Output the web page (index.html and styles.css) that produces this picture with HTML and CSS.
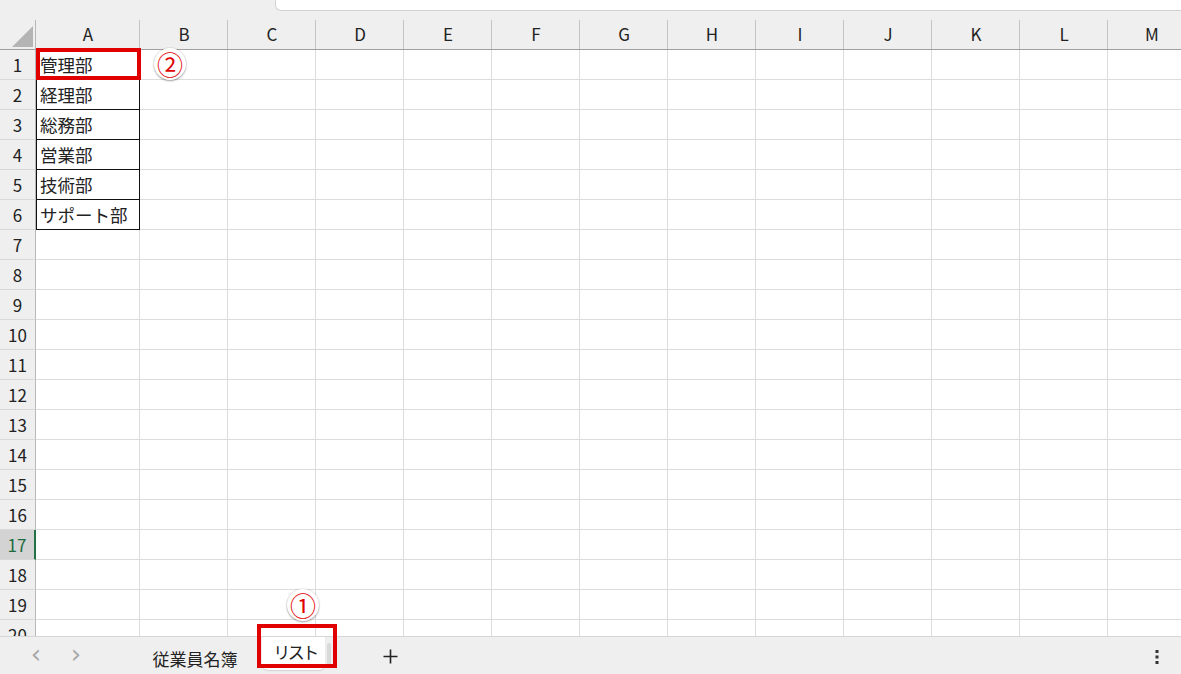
FILE: index.html
```html
<!DOCTYPE html>
<html lang="ja">
<head>
<meta charset="utf-8">
<title>リスト</title>
<link rel="stylesheet" href="styles.css">
</head>
<body>
<div class="app">
  <div class="topbar"><div class="fxbox"></div></div>
  <div class="sheet">
    <div class="grid">
      <div class="corner"><span class="tri"></span></div>
      <div class="ch">A</div><div class="ch">B</div><div class="ch">C</div><div class="ch">D</div>
      <div class="ch">E</div><div class="ch">F</div><div class="ch">G</div><div class="ch">H</div>
      <div class="ch">I</div><div class="ch">J</div><div class="ch">K</div><div class="ch">L</div><div class="ch">M</div>
    </div>
    <div class="mark mark-a1"></div>
    <div class="badge badge-2">②</div>
    <div class="badge badge-1">①</div>
  </div>
  <div class="tabbar">
    <span class="nav">&#x2039;</span>
    <span class="nav nav-next">&#x203A;</span>
    <span class="tab tab-first">従業員名簿</span>
    <span class="tab tab-active">リスト</span>
    <span class="tab-sep"></span>
    <span class="plus">
      <svg width="15" height="15" viewBox="0 0 15 15"><path d="M7.5 0.5V14.5M0.5 7.5H14.5" stroke="#222" stroke-width="1.6" fill="none"/></svg>
    </span>
    <span class="spacer"></span>
    <span class="more">
      <svg width="4" height="14" viewBox="0 0 4 14"><rect x="0.5" y="0" width="3" height="3" fill="#333"/><rect x="0.5" y="5.5" width="3" height="3" fill="#333"/><rect x="0.5" y="11" width="3" height="3" fill="#333"/></svg>
    </span>
    <div class="mark mark-tab"></div>
  </div>
</div>
<script>
(function(){
  var grid = document.querySelector('.grid');
  var data = ['管理部','経理部','総務部','営業部','技術部','サポート部'];
  var html = '';
  for (var r = 1; r <= 20; r++) {
    html += '<div class="rh' + (r === 17 ? ' rh-sel' : '') + '">' + r + '</div>';
    for (var c = 0; c < 13; c++) {
      if (c === 0 && r <= 6) {
        html += '<div class="cell cell-b">' + data[r-1] + '</div>';
      } else {
        html += '<div class="cell"></div>';
      }
    }
  }
  grid.insertAdjacentHTML('beforeend', html);
})();
</script>
</body>
</html>
```

FILE: styles.css
```css
* { box-sizing: border-box; }
html, body { margin: 0; padding: 0; }
body {
  width: 1181px;
  height: 674px;
  overflow: hidden;
  background: #ffffff;
  font-family: "Noto Sans CJK JP", "Noto Sans", sans-serif;
  color: #222222;
}
.app {
  display: flex;
  flex-direction: column;
  height: 674px;
}
.topbar {
  height: 11px;
  flex: none;
  display: flex;
  background: #efefef;
}
.fxbox {
  margin-left: 275px;
  flex: 1;
  background: #ffffff;
  border-left: 1px solid #d2d2d2;
  border-bottom: 1px solid #d2d2d2;
  border-bottom-left-radius: 6px;
}
.sheet {
  position: relative;
  flex: 1;
  overflow: hidden;
}
.grid {
  display: grid;
  grid-template-columns: 36px 104px repeat(12, 88px);
  grid-template-rows: 39px;
  grid-auto-rows: 30px;
}
.corner {
  background: #efefef;
  border-bottom: 1px solid #9f9f9f;
  position: relative;
}
.corner::after {
  content: "";
  position: absolute;
  right: 0;
  top: 9px;
  bottom: 0;
  width: 1px;
  background: #b8b8b8;
}
.tri {
  position: absolute;
  left: 12px;
  top: 15px;
  width: 21px;
  height: 21px;
  background: #b4b4b4;
  clip-path: polygon(100% 0, 100% 100%, 0 100%);
}
.ch {
  position: relative;
  background: #efefef;
  border-bottom: 1px solid #9f9f9f;
  display: flex;
  align-items: center;
  justify-content: center;
  padding-top: 6px;
  font-size: 17px;
  color: #222222;
}
.ch::after {
  content: "";
  position: absolute;
  right: 0;
  top: 9px;
  bottom: 0;
  width: 1px;
  background: #c4c4c4;
}
.rh {
  background: #efefef;
  border-right: 1px solid #b8b8b8;
  border-bottom: 1px solid #d8d8d8;
  display: flex;
  align-items: center;
  justify-content: center;
  font-size: 17px;
  color: #222222;
}
.rh-sel {
  background: #d3d3d3;
  color: #1d6b40;
  border-right: 2px solid #217346;
}
.cell {
  border-right: 1px solid #dcdcdc;
  border-bottom: 1px solid #dcdcdc;
  display: flex;
  align-items: center;
  padding-left: 4px;
  font-size: 17.5px;
  white-space: nowrap;
  color: #222222;
}
.cell-b {
  border-right: 1px solid #111111;
  border-bottom: 1px solid #111111;
  box-shadow: inset 1px 0 0 #111111;
}
.mark {
  position: absolute;
  border: 4px solid #e00000;
  pointer-events: none;
}
.mark-a1 {
  left: 36px;
  top: 37px;
  width: 105px;
  height: 32px;
}
.badge {
  position: absolute;
  width: 32px;
  height: 32px;
  border-radius: 50%;
  background: #ffffff;
  box-shadow: 0 1px 2px rgba(0,0,0,0.35), 0 0 0 1px rgba(0,0,0,0.05);
  color: #e00000;
  font-size: 26px;
  line-height: 32px;
  text-align: center;
  font-family: "Noto Sans CJK JP", sans-serif;
}
.badge-2 { left: 154px; top: 37px; }
.badge-1 { left: 287px; top: 578px; }
.tabbar {
  position: relative;
  height: 38px;
  flex: none;
  background: #efefef;
  border-top: 1px solid #d6d6d6;
  display: flex;
  align-items: stretch;
  padding-left: 28px;
  padding-right: 22px;
}
.nav {
  width: 16px;
  display: flex;
  align-items: center;
  justify-content: center;
  color: #a8a8a8;
  font-size: 26px;
  font-family: "DejaVu Sans", sans-serif;
  line-height: 1;
  padding-bottom: 4px;
}
.nav-next { margin-left: 24px; }
.tab {
  display: flex;
  align-items: center;
  justify-content: center;
  font-size: 17px;
  color: #222222;
}
.tab-first {
  margin-left: 66px;
  width: 90px;
  padding-top: 6px;
}
.tab-active {
  margin-left: 22px;
  width: 63px;
  background: #ffffff;
  border-radius: 0 0 6px 6px;
  margin-bottom: 4px;
  box-shadow: 0 1px 1px rgba(0,0,0,0.12);
  letter-spacing: -2.5px;
  padding-left: 3px;
  padding-bottom: 4px;
}
.tab-sep {
  width: 4px;
  margin: 6px 0 8px 2px;
  border-radius: 2px;
  background: #d9d9d9;
}
.plus {
  margin-left: 52px;
  display: flex;
  align-items: center;
  padding-top: 2px;
}
.spacer { flex: 1; }
.more {
  display: flex;
  align-items: center;
  padding-top: 2px;
}
.mark-tab {
  left: 257px;
  top: -13px;
  width: 80px;
  height: 44px;
}
```
